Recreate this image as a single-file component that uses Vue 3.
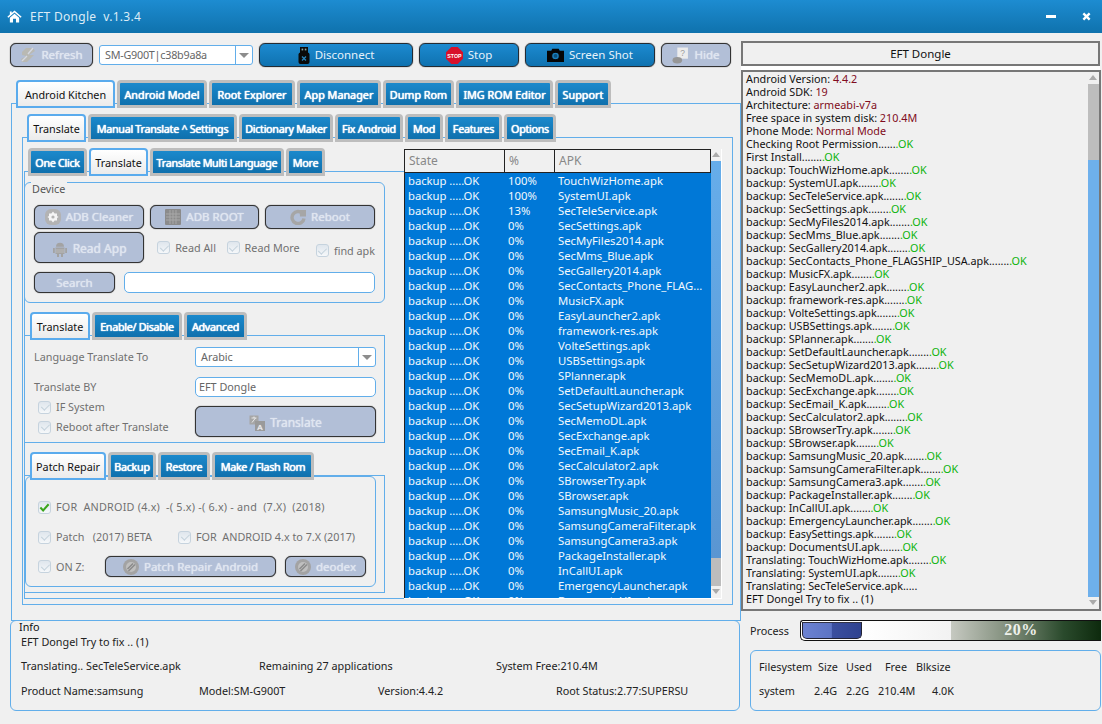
<script setup>
const apks = ['TouchWizHome','SystemUI','SecTeleService','SecSettings','SecMyFiles2014','SecMms_Blue','SecGallery2014','SecContacts_Phone_FLAG...','MusicFX','EasyLauncher2','framework-res','VolteSettings','USBSettings','SPlanner','SetDefaultLauncher','SecSetupWizard2013','SecMemoDL','SecExchange','SecEmail_K','SecCalculator2','SBrowserTry','SBrowser','SamsungMusic_20','SamsungCameraFilter','SamsungCamera3','PackageInstaller','InCallUI','EmergencyLauncher','DocumentsUI']
const pct = i => (i < 2 ? '100%' : i === 2 ? '13%' : '0%')
const rows = apks.map((a, i) => ({ a: a.endsWith('...') ? a : a + '.apk', p: pct(i) }))
const backups = ['TouchWizHome','SystemUI','SecTeleService','SecSettings','SecMyFiles2014','SecMms_Blue','SecGallery2014','SecContacts_Phone_FLAGSHIP_USA','MusicFX','EasyLauncher2','framework-res','VolteSettings','USBSettings','SPlanner','SetDefaultLauncher','SecSetupWizard2013','SecMemoDL','SecExchange','SecEmail_K','SecCalculator2','SBrowserTry','SBrowser','SamsungMusic_20','SamsungCameraFilter','SamsungCamera3','PackageInstaller','InCallUI','EmergencyLauncher','EasySettings','DocumentsUI']
const infoLines = [['Android Version: ','4.4.2'],['Android SDK: ','19'],['Architecture: ','armeabi-v7a'],['Free space in system disk: ','210.4M'],['Phone Mode: ','Normal Mode']]
const okLines = [
  'Checking Root Permission.......', 'First Install........',
  ...backups.map(b => `backup: ${b}.apk........`),
  'Translating: TouchWizHome.apk........', 'Translating: SystemUI.apk........'
]
const tabs1 = [['Android Kitchen',99],['Android Model',90],['Root Explorer',86],['App Manager',84],['Dump Rom',71],['IMG ROM Editor',97],['Support',56]]
const tabs2 = [['Translate',59],['Manual Translate ^ Settings',149],['Dictionary Maker',94],['Fix Android',68],['Mod',38],['Features',57],['Options',52]]
const tabs3 = [['One Click',59],['Translate',59],['Translate Multi Language',134],['More',39]]
const tabs4 = [['Translate',60],['Enable/ Disable',90],['Advanced',63]]
const tabs5 = [['Patch Repair',76],['Backup',48],['Restore',52],['Make / Flash Rom',102]]
</script>

<template>
  <div class="app">
    <header class="titlebar">
      <svg class="home" viewBox="0 0 16 14"><path d="M8 0.5 L15.7 7.2 L14.6 8.4 L8 2.7 L1.4 8.4 L0.3 7.2 L3 4.9 L3 1.5 L5 1.5 L5 3.2 Z M8 4 L13 8.3 L13 13.5 L9.6 13.5 L9.6 9.5 L6.4 9.5 L6.4 13.5 L3 13.5 L3 8.3 Z" fill="#fff"/></svg>
      <span class="title">EFT Dongle&nbsp; v.1.3.4</span>
      <span class="grow"></span>
      <span class="min"></span>
      <svg class="close" viewBox="0 0 10 10"><path d="M1.5 1.5 L8.5 8.5 M8.5 1.5 L1.5 8.5" stroke="#fff" stroke-width="2.6"/></svg>
    </header>

    <div class="main">
      <div class="left">
        <div class="toolbar">
          <button class="btn off w83">
            <svg class="ic16" viewBox="0 0 16 16"><path d="M6 1 H13 L15 4 L9 8 L14 8 L7 15 H2 L1 12 L6 9 L2 8 L2 5 Z" fill="#b9b9b3"/><path d="M13 1 L8 7 M2 14 L7 9" stroke="#d4d8e2" stroke-width="1.4"/></svg>Refresh
          </button>
          <div class="combo w154 device-combo"><span>SM-G900T|c38b9a8a</span><i class="arrow"></i></div>
          <button class="btn on w154">
            <svg class="ic-usb" viewBox="0 0 12 17"><rect x="2" y="0" width="8" height="6" fill="#0a0a0a"/><rect x="3.6" y="1.6" width="1.6" height="1.8" fill="#8aa"/><rect x="6.8" y="1.6" width="1.6" height="1.8" fill="#8aa"/><rect x="0.5" y="5.5" width="11" height="11.5" rx="2" fill="#0a0a0a"/><path d="M4 9.5 L8 13.5 M8 9.5 L4 13.5" stroke="#2a86bd" stroke-width="1.3"/></svg>Disconnect
          </button>
          <button class="btn on w100">
            <svg class="ic17" viewBox="0 0 16 16"><path d="M5 0 H11 L16 5 V11 L11 16 H5 L0 11 V5 Z" fill="#d8102a"/><text x="8" y="10.2" text-anchor="middle" font-size="5" font-weight="700" fill="#fff" font-family="Liberation Sans">STOP</text></svg>Stop
          </button>
          <button class="btn on w130">
            <svg class="ic-cam" viewBox="0 0 16 13"><path d="M0 2.5 H4 L5 0.5 H11 L12 2.5 H16 V13 H0 Z" fill="#050505"/><circle cx="8" cy="7.4" r="3.6" fill="#1b80bd" stroke="#050505"/><circle cx="8" cy="7.4" r="1.8" fill="#0b4f7c"/></svg>Screen Shot
          </button>
          <button class="btn off w70">
            <svg class="ic17" viewBox="0 0 16 16"><path d="M5 0.5 H15 V11 H5 Z" fill="#ececec"/><text x="10" y="8" text-anchor="middle" font-size="8" fill="#999" font-family="Liberation Sans">?</text><ellipse cx="5" cy="12.5" rx="4.5" ry="3" fill="#969696"/></svg>Hide
          </button>
        </div>

        <div class="tabs lvl1">
          <span v-for="(t, i) in tabs1" :key="t[0]" class="tab" :class="{ active: i === 0 }" :style="{ width: t[1] + 'px' }">{{ t[0] }}</span>
        </div>
        <section class="panel p1">
          <div class="tabs lvl2 tight">
            <span v-for="(t, i) in tabs2" :key="t[0]" class="tab" :class="{ active: i === 0 }" :style="{ width: t[1] + 'px' }">{{ t[0] }}</span>
          </div>
          <section class="panel p2">
            <div class="split">
              <div class="col-left">
                <div class="tabs lvl3 tight">
                  <span v-for="(t, i) in tabs3" :key="t[0]" class="tab" :class="{ active: i === 1 }" :style="{ width: t[1] + 'px' }">{{ t[0] }}</span>
                </div>
                <section class="p3">
                <div class="group device">
                  <div class="legend">Device</div>
                  <div class="drow r1">
                    <button class="btn off d1"><svg class="ic16" viewBox="0 0 16 16"><rect width="16" height="16" rx="6" fill="#b3b3b3"/><path d="M8 2.5 L9.6 4.4 H12 V7 L13.6 8 L12 9 V11.6 H9.6 L8 13.5 L6.4 11.6 H4 V9 L2.4 8 L4 7 V4.4 H6.4 Z" fill="#f5f5f5"/><circle cx="8" cy="8" r="1.6" fill="#b3b3b3"/></svg>ADB Cleaner</button>
                    <button class="btn off d2"><svg class="ic16" viewBox="0 0 16 16"><rect width="16" height="16" rx="1" fill="#8b8b8b"/><path d="M5 1 V15 M8 1 V15 M11 1 V15 M1 5 H15 M1 8 H15 M1 11 H15" stroke="#a8a8a8" stroke-width="1"/></svg>ADB ROOT</button>
                    <button class="btn off d3"><svg class="ic16" viewBox="0 0 16 16"><path d="M12.6 4.6 A6 6 0 1 0 14 9.4" fill="none" stroke="#a6a6a6" stroke-width="3.4"/><path d="M9.5 1 H16 V7.5 H10 Z" fill="#a6a6a6"/></svg>Reboot</button>
                  </div>
                  <div class="drow r2">
                    <button class="btn off d4"><svg class="ic16" viewBox="0 0 14 16"><path d="M3 5.8 A4 4 0 0 1 11 5.8 Z M2.5 6.6 H11.5 V13 H2.5 Z M0 7 H1.8 V12 H0 Z M12.2 7 H14 V12 H12.2 Z M4 13 H6 V16 H4 Z M8 13 H10 V16 H8 Z" fill="#a3a3a3"/><path d="M2.5 9 H11.5 M2.5 11 H11.5" stroke="#c6c6c6" stroke-width=".7"/></svg>Read App</button>
                    <label class="chk c1"><i class="box"></i>Read All</label>
                    <label class="chk c2"><i class="box"></i>Read More</label>
                    <label class="chk c3"><i class="box"></i>find apk</label>
                  </div>
                  <div class="drow r3">
                    <button class="btn off d5">Search</button>
                    <div class="input grow"></div>
                  </div>
                </div>

                <div class="tabs lvl4 tight">
                  <span v-for="(t, i) in tabs4" :key="t[0]" class="tab" :class="{ active: i === 0 }" :style="{ width: t[1] + 'px' }">{{ t[0] }}</span>
                </div>
                <section class="panel p4">
                  <div class="tcols">
                    <div class="tl">
                      <div class="muted lang">Language Translate To</div>
                      <div class="muted by">Translate BY</div>
                      <label class="chk c4"><i class="box"></i>IF System</label>
                      <label class="chk c5"><i class="box"></i>Reboot after Translate</label>
                    </div>
                    <div class="tr">
                      <div class="combo full"><span>Arabic</span><i class="arrow"></i></div>
                      <div class="input by-in">EFT Dongle</div>
                      <button class="btn off tbtn">
                        <svg class="ic16" viewBox="0 0 16 16"><rect x="0.5" y="0.5" width="9" height="9" fill="#a6a6a6"/><rect x="6" y="6" width="10" height="10" fill="#9a9a9a"/><text x="11" y="14.5" text-anchor="middle" font-size="8" fill="#eee" font-family="Liberation Sans">A</text><path d="M2.5 3 H7.5 M5 1.5 V3 M3 7.5 L6.5 3" stroke="#eee" stroke-width="0.9" fill="none"/></svg>Translate
                      </button>
                    </div>
                  </div>
                </section>

                <div class="tabs lvl5 tight">
                  <span v-for="(t, i) in tabs5" :key="t[0]" class="tab" :class="{ active: i === 0 }" :style="{ width: t[1] + 'px' }">{{ t[0] }}</span>
                </div>
                <section class="panel p5">
                  <div class="inner">
                    <label class="chk c6"><i class="box green"><svg viewBox="0 0 12 12"><path d="M1.5 6 L4.5 9.2 L10.5 2.5" fill="none" stroke="#3aa51c" stroke-width="2.2"/></svg></i>FOR&nbsp; ANDROID (4.x)&nbsp; -( 5.x) -( 6.x) - and&nbsp; (7.X)&nbsp; (2018)</label>
                    <div class="prow">
                      <label class="chk c7"><i class="box"></i>Patch&nbsp;&nbsp; (2017) BETA</label>
                      <label class="chk"><i class="box"></i>FOR&nbsp; ANDROID 4.x to 7.X (2017)</label>
                    </div>
                    <div class="prow p3row">
                      <label class="chk c8"><i class="box"></i>ON Z:</label>
                      <button class="btn off pr"><svg class="ic16" viewBox="0 0 16 16"><circle cx="8" cy="8" r="8" fill="#a3a3a3"/><circle cx="8" cy="8" r="5" fill="#bfbfbf"/><path d="M4.5 10 L10 4.5 M5.5 12 L12 5.5" stroke="#8b8b8b" stroke-width="1.5"/></svg>Patch Repair Android</button>
                      <button class="btn off de"><svg class="ic16" viewBox="0 0 16 16"><circle cx="8" cy="8" r="8" fill="#a3a3a3"/><circle cx="8" cy="8" r="5" fill="#bfbfbf"/><path d="M4.5 10 L10 4.5 M5.5 12 L12 5.5" stroke="#8b8b8b" stroke-width="1.5"/></svg>deodex</button>
                    </div>
                  </div>
                </section>
                </section>
              </div>

              <div class="listwrap">
                <div class="list">
                  <div class="lhead">
                    <span class="c-state">State</span><span class="c-pct">%</span><span class="c-apk">APK</span>
                  </div>
                  <div class="lbody">
                    <div v-for="r in rows" :key="r.a" class="lrow">
                      <span class="s">backup .....OK</span><span class="p">{{ r.p }}</span><span class="a">{{ r.a }}</span>
                    </div>
                  </div>
                </div>
                <div class="vscroll small">
                  <i class="up"></i><div class="thumb t-list"></div><div class="rest"></div><i class="down"></i>
                </div>
              </div>
            </div>
          </section>
        </section>

        <div class="group info">
          <div class="legend">Info</div>
          <div class="irow i1"><span>EFT Dongel Try to fix .. (1)</span></div>
          <div class="irow i2"><span class="x1">Translating.. SecTeleService.apk</span><span class="x2">Remaining 27 applications</span><span>System Free:210.4M</span></div>
          <div class="irow i3"><span class="y1">Product Name:samsung</span><span class="y2">Model:SM-G900T</span><span class="y3">Version:4.4.2</span><span>Root Status:2.77:SUPERSU</span></div>
        </div>
      </div>

      <aside class="right">
        <div class="rhead"><div class="rtitle">EFT Dongle</div></div>
        <div class="logbox">
          <div class="log">
            <div v-for="l in infoLines" :key="l[0]">{{ l[0] }}<span class="val">{{ l[1] }}</span></div>
            <div v-for="l in okLines" :key="l">{{ l.slice(0, -1) }}<span class="ok">.OK</span></div>
            <div>Translating: SecTeleService.apk.....</div>
            <div>EFT Dongel Try to fix .. (1)</div>
          </div>
          <div class="vscroll">
            <i class="up"></i><div class="rest r-top"></div><div class="thumb t-log"></div><i class="down"></i>
          </div>
        </div>
        <div class="process">
          <span class="plabel">Process</span>
          <div class="pbar"><div class="pfill"></div><div class="pwhite"></div><div class="pdark"><b>20%</b></div></div>
        </div>
        <div class="fs">
          <div class="fsrow a">
            <span>Filesystem</span><span>Size</span><span>Used</span><span>Free</span><span>Blksize</span>
          </div>
          <div class="fsrow b">
            <span>system</span><span>2.4G</span><span>2.2G</span><span>210.4M</span><span>4.0K</span>
          </div>
        </div>
      </aside>
    </div>
  </div>
</template>

<style>
html, body { margin: 0; background: #f0f0f0; }
</style>

<style scoped>
.app { width: 1102px; height: 724px; overflow: hidden; background: #f0f0f0; font: 10.8px/14px "Noto Sans", sans-serif; color: #111; }
.titlebar { height: 33px; display: flex; align-items: center; padding: 0 11px 0 7px; box-sizing: border-box; background: linear-gradient(#1d8cd1, #0f72ad); }
.home { width: 15px; height: 13px; margin-right: 8px; }
.title { color: #dcecf7; font-size: 12px; letter-spacing: .3px; padding-top: 1px; }
.grow { flex: 1; }
.min { width: 10px; height: 3px; background: #fff; margin-right: 26px; }
.close { width: 9px; height: 9px; }

.main { display: flex; }
.left { width: 741px; flex: none; padding: 10px 0 0 10px; box-sizing: border-box; }
.right { flex: 1; padding-top: 8px; }

.toolbar { display: flex; gap: 6px; height: 24px; }
.btn { box-sizing: border-box; display: flex; align-items: center; justify-content: center; gap: 5px; padding: 0; font: inherit; font-size: 11.5px; border: 1px solid #222; border-radius: 6px; box-shadow: 0 0 1px #222; }
.btn.on { background: linear-gradient(#1c8ad0, #0f72b0); color: #e6f2fb; border-color: #232b33; }
.btn.off { background: #b2bfd7; color: #dfe5f0; border-color: #333; text-shadow: 0 0 1px #f0f3f9; }
.w83 { width: 83px; } .w154 { width: 154px; } .w100 { width: 100px; } .w130 { width: 130px; } .w70 { width: 70px; }
.ic16 { width: 16px; height: 16px; flex: none; }
.ic17 { width: 17px; height: 17px; flex: none; }
.ic-usb { width: 12px; height: 17px; flex: none; }
.ic-cam { width: 17px; height: 14px; flex: none; }
.combo { box-sizing: border-box; height: 20px; display: flex; align-items: center; justify-content: space-between; padding-left: 5px; background: #fff; border: 1px solid #62aeea; border-radius: 3px; color: #666; }
.device-combo { margin-top: 2px; letter-spacing: -.25px; }
.arrow { width: 16px; height: 100%; border-left: 1px solid #62aeea; position: relative; flex: none; }
.arrow::after { content: ""; position: absolute; left: 3px; top: 7px; border: 5px solid transparent; border-top: 5px solid #8d8d8d; border-bottom: 0; }

.tabs { display: flex; gap: 2px; position: relative; z-index: 1; height: 28px; }
.tab { box-sizing: border-box; height: 28px; padding: 0; text-align: center; line-height: 24px; white-space: nowrap; color: #fff; text-shadow: 0 0 1px #fff, 0 0 1px #e4f2fb; background: linear-gradient(#1b89cc, #0f70ad); border: 3px solid #bdbdbd; border-radius: 4px 4px 0 0; }
.tab.active { color: #111; text-shadow: none; background: linear-gradient(#fff, #ebebeb); border: 2px solid #5aabed; line-height: 26px; letter-spacing: 0; }
.tight .tab:not(.active) { letter-spacing: -.32px; }

.panel { border: 1px solid #62aeea; box-sizing: border-box; }
.lvl1 { margin: 13px 0 -5px 6px; }
.p1 { width: 730px; height: 518px; margin-left: 1px; padding: 10px 0 0 10px; }
.lvl2 { margin: 0 0 -5px 5px; }
.p2 { width: 711px; height: 468px; padding: 10px 0 0 1px; }
.split { display: flex; }
.col-left { width: 380px; flex: none; }
.lvl3 { margin: 0 0 -5px 4px; }
.p3 { box-sizing: border-box; height: 428px; border: 1px solid #62aeea; border-right: 0; padding-top: 10px; }
.p3 > * { margin-left: -1px; width: 361px; }

.group { box-sizing: border-box; border: 1px solid #62aeea; border-radius: 6px; }
.legend { width: fit-content; margin-top: -1px; padding: 0 1px; line-height: 14px; color: #555; background: #f0f0f0; }
.device { height: 121px; padding: 0 9px; }
.device .legend { margin-left: -3px; padding-right: 2px; }
.drow { display: flex; }
.r1 { gap: 6px; margin-top: 9px; }
.r2 { margin-top: 3px; align-items: center; }
.r3 { margin-top: 9px; gap: 9px; }
.d1 { width: 110px; height: 24px; } .d2 { width: 109px; height: 24px; } .d3 { width: 110px; height: 24px; }
.d4 { width: 111px; height: 31px; font-size: 12px; padding-top: 2px; }
.d5 { width: 81px; height: 21px; }
.input { box-sizing: border-box; height: 21px; background: #fff; border: 1px solid #62aeea; border-radius: 5px; padding-left: 3px; line-height: 18px; color: #666; }
.chk { display: flex; align-items: center; gap: 5px; color: #707070; white-space: nowrap; }
.box { box-sizing: border-box; width: 13px; height: 13px; border: 1px solid #c6d3de; border-radius: 3px; background: linear-gradient(#dfe6ed, #f6f8fa); display: block; flex: none; position: relative; }
.box::after { content: ""; position: absolute; left: 3.5px; top: 0.5px; width: 3.5px; height: 7px; border: solid #c4d2dc; border-width: 0 1.5px 1.5px 0; transform: rotate(45deg); }
.box.green::after { display: none; }
.box.green svg { width: 11px; height: 11px; display: block; }
.c1 { margin-left: 13px; width: 70px; } .c2 { width: 90px; } .c3 { margin-top: 6px; }

.lvl4 { margin: 9px 0 -5px 5px; }
.p4 { height: 108px; padding: 11px 8px 0 9px; }
.tcols { display: flex; justify-content: space-between; }
.tl { width: 160px; }
.tr { width: 181px; }
.muted { color: #707070; }
.lang { margin-top: 3px; }
.by { margin-top: 16px; }
.c4 { margin: 6px 0 0 4px; }
.c5 { margin: 6px 0 0 4px; }
.by-in { margin-top: 10px; height: 20px; }
.tbtn { width: 181px; height: 31px; margin-top: 9px; font-size: 12px; padding-top: 3px; }

.lvl5 { margin: 9px 0 -5px 5px; }
.p5 { height: 118px; padding: 0; }
.inner { box-sizing: border-box; width: 351px; height: 111px; border: 1px solid #62aeea; border-radius: 6px; padding: 23px 0 0 12px; }
.c6 { letter-spacing: .22px; }
.prow { display: flex; margin-top: 16px; }
.c7 { width: 140px; }
.p3row { margin-top: 12px; align-items: center; }
.c8 { width: 67px; }
.pr { width: 171px; height: 21px; }
.de { width: 81px; height: 21px; margin-left: 9px; }

.listwrap { display: flex; width: 318px; height: 450px; margin: 1px 0 0 0; position: relative; z-index: 2; border-right: 1px solid #fff; border-bottom: 1px solid #fff; box-sizing: border-box; background: #f0f0f0; }
.list { width: 307px; height: 100%; overflow: hidden; border-left: 1px solid #222; box-sizing: border-box; }
.lhead { display: flex; height: 24px; box-sizing: border-box; border-top: 1px solid #222; border-bottom: 1px solid #222; color: #888; line-height: 22px; font-size: 12px; }
.lhead span { box-sizing: border-box; padding-left: 4px; border-right: 1px solid #222; }
.c-state { width: 100px; } .c-pct { width: 50px; } .c-apk { flex: 1; }
.lbody { background: #0078d7; color: #f2f8fd; height: 426px; overflow: hidden; font-size: 11.3px; }
.lrow { display: flex; height: 15px; line-height: 15px; padding-left: 3px; white-space: nowrap; }
.s { width: 100px; letter-spacing: -.05px; } .p { width: 50px; } .a { flex: 1; }

.vscroll { width: 10px; flex: none; display: flex; flex-direction: column; background: #f0f0f0; }
.vscroll .up, .vscroll .down { display: block; height: 12px; position: relative; flex: none; }
.up::after { content: ""; position: absolute; left: 1px; top: 3px; border: 4px solid transparent; border-bottom: 5px solid #aaa; border-top: 0; }
.down::after { content: ""; position: absolute; left: 1px; top: 3px; border: 4px solid transparent; border-top: 5px solid #aaa; border-bottom: 0; }
.thumb { background: #6eb0ec; }
.rest { background: #bdbdbd; }
.t-list { height: 397px; background: linear-gradient(#66adea, #5a96d2); }
.small .rest { flex: 1; }
.r-top { height: 76px; flex: none; }
.t-log { flex: 1; }

.info { width: 730px; height: 91px; margin-top: -1px; padding: 0 10px; }
.info .legend { color: #111; margin-left: -2px; padding: 0; background: transparent; }
.irow { display: flex; color: #222; white-space: nowrap; }
.i1 { margin-top: 1px; }
.i2 { margin-top: 10px; }
.i3 { margin-top: 11px; }
.x1 { width: 238px; } .x2 { width: 237px; }
.y1 { width: 178px; } .y2 { width: 179px; } .y3 { width: 178px; }

.rhead { width: 359px; height: 29px; background: #fff; }
.rtitle { box-sizing: border-box; height: 25px; border: 2px solid #777; background: #f0f0f0; text-align: center; line-height: 21px; font-size: 11.5px; color: #111; }
.logbox { box-sizing: border-box; display: flex; width: 360px; height: 541px; border: 2px solid #777; background: #f0f0f0; }
.log { flex: 1; padding-left: 3px; line-height: 13px; overflow: hidden; white-space: nowrap; color: #111; }
.val { color: #800c20; }
.ok { color: #0bb30b; }
.logbox .vscroll { width: 11px; }

.process { display: flex; align-items: center; margin: 9px 0 0 9px; height: 21px; }
.plabel { width: 50px; color: #222; }
.pbar { box-sizing: border-box; display: flex; width: 301px; height: 21px; border: 1px solid #111; border-width: 1px 0 1px 1px; border-radius: 3px 0 0 5px; padding: 1px 0 0 1px; background: #fff; overflow: hidden; }
.pfill { width: 60px; height: 17px; background: linear-gradient(90deg, #6c82d2, #5d74c4 49%, #3b4f9f 50%, #2f4290); border: 1px solid #223; border-top-color: #334; border-radius: 0 0 5px 5px; box-sizing: border-box; flex: none; }
.pwhite { width: 89px; background: linear-gradient(90deg, #fff, #f2f2f2); margin-top: -1px; }
.pdark { flex: 1; margin-top: -1px; background: linear-gradient(90deg, #c6c9c1, #7d8b78 40%, #2a4a2c 75%, #0d2a0d); text-align: center; color: #eef0ea; line-height: 18px; }
.pdark b { font: 700 16px/18px "Liberation Serif", serif; margin-right: 10px; letter-spacing: .5px; }

.fs { box-sizing: border-box; width: 351px; height: 61px; margin: 9px 0 0 9px; border: 1px solid #62aeea; border-radius: 6px; padding: 9px 0 0 8px; color: #222; }
.fsrow { display: flex; }
.fsrow.b { margin-top: 10px; }
.a span:nth-child(1) { width: 59px; } .a span:nth-child(2) { width: 28px; } .a span:nth-child(3) { width: 39px; } .a span:nth-child(4) { width: 31px; }
.b span:nth-child(1) { width: 55px; } .b span:nth-child(2) { width: 32px; } .b span:nth-child(3) { width: 32px; } .b span:nth-child(4) { width: 54px; }
</style>
